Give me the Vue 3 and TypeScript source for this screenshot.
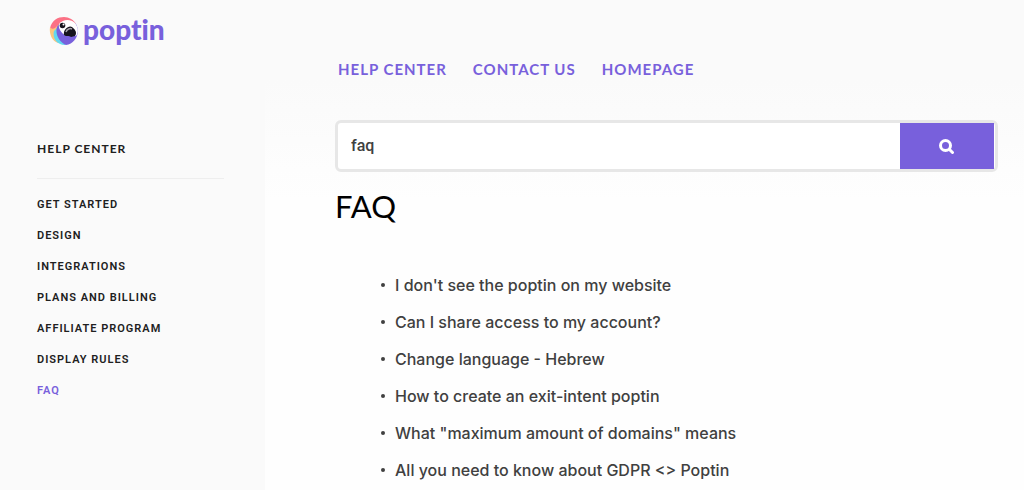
<script setup lang="ts">
import { ref } from 'vue'

interface NavLink {
  label: string
  active?: boolean
}

const query = ref('faq')

const topLinks: string[] = ['Help Center', 'Contact Us', 'Homepage']

const categories: NavLink[] = [
  { label: 'Get Started' },
  { label: 'Design' },
  { label: 'Integrations' },
  { label: 'Plans and Billing' },
  { label: 'Affiliate Program' },
  { label: 'Display Rules' },
  { label: 'FAQ', active: true },
]

const articles: string[] = [
  "I don't see the poptin on my website",
  'Can I share access to my account?',
  'Change language - Hebrew',
  'How to create an exit-intent poptin',
  'What "maximum amount of domains" means',
  'All you need to know about GDPR <> Poptin',
]
</script>

<template>
  <div class="page">
    <aside class="sidebar">
      <a class="logo" href="#" aria-label="poptin">
        <svg class="mark" viewBox="0 0 30 30" aria-hidden="true">
          <path d="M1 12C3 4 9 1 15 1C20 1 25 4 27 8L18 6L10 9L6 15C4 15 2 14 1 12Z" fill="#fb7185" />
          <path d="M1 11C0 18 3 25 9 27L9 20L7 14L9 9C6 13 3 14 1 11Z" fill="#fdc77d" />
          <path d="M5 15C3 22 8 29 16 29L18 27L8 12Z" fill="#63d9ef" />
          <path d="M8 11C11 5 21 3 27 8C32 17 26 28 17 29C10 26 6 18 8 11Z" fill="#7860dc" />
          <path d="M10 8C14 3 22 3 26 7C29 11 30 16 27 20L17 20C12 17 9 12 10 8Z" fill="#fff" />
          <path d="M15 19C14 13 20 9 23 11C27 14 28 17 26 20L22 21C20 19 17 21 15 19Z" fill="#15131c" />
          <path d="M17 16C18 13 21 12 23 13" fill="none" stroke="#a7a4ac" stroke-width="1.500" />
          <circle cx="13.500" cy="9.500" r="2.800" fill="#15131c" />
          <circle cx="14.500" cy="8.500" r="1" fill="#fff" />
        </svg>
        <span class="wordmark">poptin</span>
      </a>
      <h2 class="side-title">Help Center</h2>
      <nav class="side-nav" aria-label="Categories">
        <a
          v-for="item in categories"
          :key="item.label"
          href="#"
          :class="{ active: item.active }"
          :aria-current="item.active ? 'page' : undefined"
        >{{ item.label }}</a>
      </nav>
    </aside>

    <main class="main">
      <nav class="top-nav" aria-label="Main">
        <a v-for="label in topLinks" :key="label" href="#">{{ label }}</a>
      </nav>
      <form class="search" role="search" @submit.prevent>
        <input v-model="query" type="text" aria-label="Search articles" />
        <button type="submit" aria-label="Search">
          <svg viewBox="0 0 16 16" aria-hidden="true">
            <circle cx="6.500" cy="7.500" r="5" />
            <path d="M10.500 11.500L13.500 14.500" />
          </svg>
        </button>
      </form>
      <h1>FAQ</h1>
      <ul class="articles">
        <li v-for="title in articles" :key="title">
          <a href="#">{{ title }}</a>
        </li>
      </ul>
    </main>
  </div>
</template>

<style>
body {
  background: #fefefe;
}
</style>

<style scoped>
.page {
  display: flex;
  height: 100vh;
  overflow: hidden;
  font-family: Lato, "Open Sans", sans-serif;
  color: #404040;
}

a {
  color: inherit;
  text-decoration: none;
}

.sidebar {
  flex: none;
  box-sizing: border-box;
  width: 265px;
  padding: 15px 41px 0 37px;
  background: #fafafa;
}

.logo {
  display: flex;
  align-items: center;
  gap: 4px;
  height: 32px;
  margin-left: 12px;
  color: #7860dc;
}

.mark {
  width: 30px;
  height: 30px;
}

.wordmark {
  font-size: 28px;
  line-height: 28px;
  font-weight: 900;
  font-variant-ligatures: none;
  padding-bottom: 4px;
}

.side-title {
  margin: 92px 0 16px;
  padding-bottom: 19px;
  border-bottom: 1px solid #eeeeee;
  font-size: 12px;
  line-height: 20px;
  font-weight: 700;
  letter-spacing: 1px;
  text-transform: uppercase;
  color: #202020;
}

.side-nav {
  display: flex;
  flex-direction: column;
  gap: 11px;
}

.side-nav a {
  font-family: Roboto, sans-serif;
  font-size: 11px;
  line-height: 20px;
  font-weight: 600;
  letter-spacing: 1px;
  text-transform: uppercase;
  color: #202020;
}

.side-nav a.active {
  color: #7860dc;
}

.main {
  flex: 1;
  min-width: 0;
  padding: 59px 26px 0 70px;
  background: linear-gradient(#fafafa 0, #fafafa 80px, #fefefe 200px);
}

.top-nav {
  display: flex;
  gap: 26px;
  padding-left: 3px;
  font-size: 15px;
  line-height: 20px;
  font-weight: 700;
  letter-spacing: 1px;
  text-transform: uppercase;
  color: #7860dc;
}

.search {
  display: flex;
  box-sizing: border-box;
  height: 52px;
  margin-top: 41px;
  border: 3px solid #e7e7e7;
  border-radius: 6px;
  background: #fff;
}

.search input {
  flex: 1;
  min-width: 0;
  padding: 0 13px;
  border: 0;
  outline: 0;
  background: transparent;
  font: 500 16px/20px Roboto, sans-serif;
  color: #404040;
}

.search button {
  display: flex;
  align-items: center;
  justify-content: center;
  width: 94px;
  margin-right: 1px;
  padding: 0;
  border: 0;
  background: #7860dc;
}

.search svg {
  width: 16px;
  height: 16px;
  fill: none;
  stroke: #fff;
  stroke-width: 3;
  stroke-linecap: round;
}

h1 {
  margin: 14px 0 0;
  font-size: 31px;
  line-height: 40px;
  font-weight: 400;
  color: #000;
}

.articles {
  display: flex;
  flex-direction: column;
  gap: 13px;
  margin: 47px 0 0;
  padding: 0 0 0 46px;
  list-style: none;
}

.articles li {
  display: flex;
  align-items: center;
  gap: 10px;
  font-family: Inter, "Open Sans", sans-serif;
  font-size: 16px;
  line-height: 24px;
  font-weight: 500;
}

.articles li::before {
  content: "";
  flex: none;
  width: 4px;
  height: 4px;
  border-radius: 50%;
  background: #404040;
}
</style>
